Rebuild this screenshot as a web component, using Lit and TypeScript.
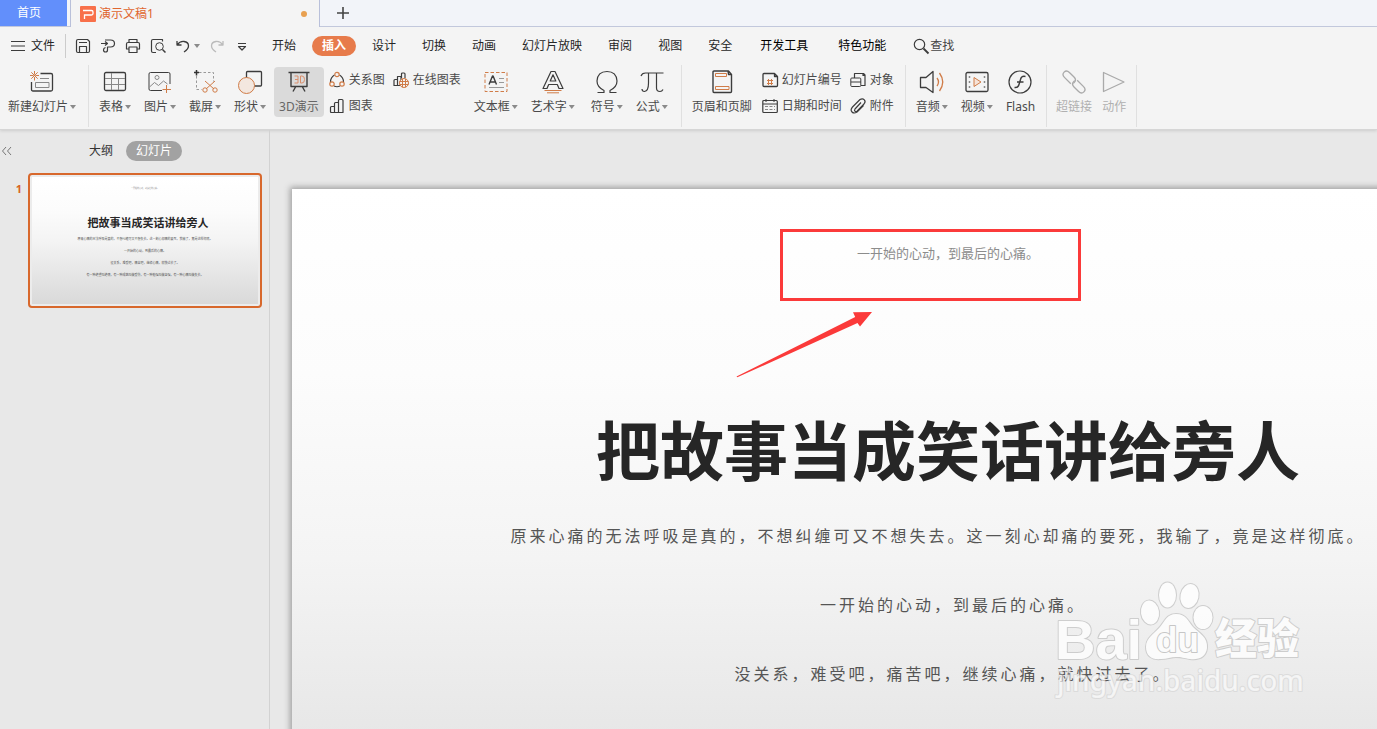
import { LitElement, html, svg, css } from "lit";
import { customElement, property } from "lit/decorators.js";
import { classMap } from "lit/directives/class-map.js";

const O = "#d07c48";

/* 24 × 24 glyphs for the large ribbon buttons */
const bigIcons: Record<string, unknown> = {
  newSlide: svg`<path stroke-width="1.300" d="M10.500 3.500H21q1.500 0 1.500 1.500v14.500q0 1.500-1.500 1.500H3q-1.500 0-1.500-1.500V12"/><path stroke="#888" d="M5.500 12.500h13.500v5H5.500zM10 8.500h9"/><path stroke="${O}" d="M4.500 1v3.500M4.500 7v3.500M0 5.500h3.500M5.500 5.500h3.500M1.300 2.300l6.400 6.400M7.700 2.300L1.300 8.700"/>`,
  table: svg`<rect x="1.500" y="2.500" width="21" height="18" rx="1.500" stroke-width="1.300"/><path stroke="#888" d="M2 8.500h20M2 14.500h20M8.500 3v17M15.500 8.500V20"/>`,
  picture: svg`<path d="M14 20.500H2.500q-1.500 0-1.500-1.500V4q0-1.500 1.500-1.500h18Q22 2.500 22 4v10"/><circle cx="9" cy="7.500" r="2" stroke="#888"/><path stroke="#888" d="M1.500 17l5-4.500 4 3 5-4.500 4 3"/><path stroke="${O}" d="M18.500 15v8M14.500 19.500h8.500"/>`,
  capture: svg`<path stroke="#999" stroke-dasharray="2.500 2" d="M6 2.500h14.500v9M3.500 6v13.500h5"/><path stroke="#333" stroke-width="1.500" d="M3.500 0v5.500M1 2.500h5"/><path stroke="${O}" d="M12 11l9 8M22 11l-9 8"/><circle stroke="${O}" cx="12" cy="20" r="2.200"/><circle stroke="${O}" cx="22" cy="20" r="2.200"/>`,
  shape: svg`<rect x="8.500" y="1.500" width="15" height="14.500" rx="1" stroke-width="1.300"/><circle cx="8.500" cy="15.500" r="8" fill="#f3e7df" stroke="${O}"/>`,
  demo: svg`<path stroke-width="1.400" d="M1.500 2.500h21M4 3v13.500h16V3M8.500 17l-2.500 4.500M15.500 17l2.500 4.500"/><path stroke="#d98f6c" d="M7.500 6h3.500v7H7.500M8 9.500h3M13.500 6h1.500q2.500 0 2.500 3.500t-2.500 3.500h-1.500z"/>`,
  textBox: svg`<rect x="1" y="2.500" width="22" height="19" stroke="${O}" stroke-dasharray="3.500 2"/><path stroke-width="1.400" d="M5 14.500L8.500 6h.6l3.400 8.500M6.300 12h5"/><path stroke="#999" d="M15 8.500h5M15 12.500h5M5 17.500h15"/>`,
  wordArt: svg`<path stroke-width="1.200" d="M2 18.500L10 1.500h4l8 17h-4l-1.700-4H7.700L6 18.500zM9.200 11h5.600L12 4.800z"/><path stroke="${O}" d="M3.500 20.500h17M6 22.800h12"/>`,
  symbol: svg`<path stroke-width="1.200" d="M2.500 22.500h6.500v-2Q2 17 2 11 2.500 1.500 12 1.500T22 11q0 6-7 9.500v2h6.500"/>`,
  formula: svg`<path stroke-width="1.200" d="M1 6q1-3 4.500-3H23.500M8.500 3v10q0 8-4 8.500-2.500 0-2.500-2.500M16.500 3v15q0 3.500 3.500 3.500 2 0 3-2"/>`,
  header: svg`<path stroke-width="1.400" d="M18.500 1H4Q3 1 3 2v19q0 1.500 1 1.500h16.500q1 0 1-1V4.500zM18 1l.5 3.500h3"/><path stroke="${O}" d="M5.500 3.500h11v3h-11zM5.500 16.500h13.500v3H5.500z"/>`,
  audio: svg`<path stroke-width="1.300" d="M13 1.500v21L6 17.500H.5V7.500H6z"/><path stroke="${O}" stroke-width="1.300" d="M17 8q3 4 0 8M19.500 3q6.500 9 0 18"/>`,
  video: svg`<rect x="1" y="2.500" width="22" height="19" rx="1.500" stroke-width="1.300"/><path stroke="#888" stroke-width="1.500" stroke-dasharray="2 3" d="M4.500 6v13M19.500 6v13"/><path stroke="${O}" fill="#f6e3d8" d="M9 7.500v9l7-4.500z"/>`,
  flash: svg`<circle cx="12" cy="12" r="11" stroke-width="1.200"/><path stroke-width="1.400" d="M17.500 6.500q-4-1-5 3l-1.500 5q-1 3.500-4.500 3M9 12h6.500"/>`,
  link: svg`<g stroke="#aaa" stroke-width="1.300" transform="rotate(45 12 12)"><path d="M11 15.500H2q-4 0-4-3.500T2 8.500h6.500q4 0 4 3.500v1.500"/><path d="M13 8.500H22q4 0 4 3.500t-4 3.500h-6.500q-4 0-4-3.500v-1.500"/></g>`,
  action: svg`<path stroke="#aaa" stroke-width="1.300" d="M1.500 2.500v19L22 12z"/>`,
};

/* 16 × 16 glyphs for small buttons and the quick bar */
const smallIcons: Record<string, unknown> = {
  relation: svg`<path stroke-width="1.200" d="M5.500 3Q1.500 5.500 1.500 10M10.500 3q4 2.500 4 7M5 14q3 1.500 6 0"/><g stroke="${O}" stroke-width="1.200"><circle cx="8" cy="2.500" r="2.200"/><circle cx="3" cy="12" r="2.200"/><circle cx="13" cy="12" r="2.200"/></g>`,
  chart: svg`<path stroke-width="1.200" d="M1.500 9.500q0-1 1-1h3v6h-3q-1 0-1-1zM5.500 14.500v-9q0-1 1-1h3v10zM9.500 14.500v-12q0-1 1-1H13q1 0 1 1v12z"/>`,
  onlineChart: svg`<path stroke-width="1.200" d="M1 13.500V8.500q0-1 1-1h2.500v6zM4.500 13.500v-9h3.500v9zM8.500 6V2q0-1 1-1H11q1 0 1 1v4"/><circle cx="11" cy="11" r="4.500" fill="#f4f4f4" stroke="${O}"/><path stroke="${O}" d="M6.500 9.500h9M6.500 12.500h9M9.500 6.800v8.500M12.500 6.800v8.500"/>`,
  slideNo: svg`<path stroke-width="1.300" d="M12.500 1.500H2q-1 0-1 1v11q0 1 1 1h12.500q1 0 1-1V4.500zM12.500 1.500v3h3"/><path stroke="${O}" d="M5 8.500h6M5 11.500h6M6.500 7v6M9.500 7v6"/>`,
  date: svg`<rect x=".8" y="2.500" width="14.500" height="12" rx="1" stroke-width="1.200"/><path d="M1 6h14M4 1v3M12 1v3"/><path stroke="#888" stroke-dasharray="3 1.500" d="M3 8.500h10M3 11.500h10"/>`,
  object: svg`<path stroke-width="1.200" d="M4.500 6V1.500h9L15 3v10.500h-4M13 1.500v2h2"/><rect x=".8" y="6" width="10" height="8.500" rx="1"/><path d="M1 10h10"/>`,
  attach: svg`<path stroke-width="1.200" d="M11 4.500L5 11q-1 1.500 0 2.200t2 0L14 6q2-2.500.3-4.200T10 1.500L2.500 9Q0 12 2 14t5 0l6.500-6.500"/>`,
  save: svg`<path stroke-width="1.200" d="M1.500 3q0-1.500 1.500-1.500h9.500l2 2V13q0 1.500-1.500 1.500H3q-1.500 0-1.500-1.500zM4 4.500h8M4.500 14V8.500h7V14"/>`,
  exportPdf: svg`<path stroke-width="1.200" d="M5 2h5.500q4 0 4 3.500T10.500 9H7.500v3q0 2-2 2t-2-2 2-2.500M1 5.500h6M5 3.500l2.500 2L5 7.500"/>`,
  print: svg`<path stroke-width="1.200" d="M4 4.500v-3h8v3M4 11H1.500V6q0-1.500 1.500-1.500h10q1.500 0 1.500 1.500v5H12M4 9h8v5.500H4z"/>`,
  preview: svg`<path stroke-width="1.200" d="M6 14.500H3q-1.500 0-1.500-1.500V3q0-1.500 1.500-1.500h9.500v2"/><circle cx="9.500" cy="8.500" r="3.800"/><path stroke-width="1.500" d="M12.500 11.500l3 3"/>`,
  undo: svg`<path stroke-width="1.300" d="M2 3v4h4.500M2 7q3-4 7-3.500 4.500.5 4.500 4.500 0 3-4.500 6"/>`,
  redo: svg`<path stroke="#bbb" stroke-width="1.300" d="M14 3v4H9.500M14 7Q11 3 7 3.500 2.500 4 2.500 8q0 3 4.500 6"/>`,
  more: svg`<path stroke-width="1.200" d="M4 5.500h8M4.500 8.500l3.500 3.500 3.500-3.500z"/>`,
  menu: svg`<path stroke-width="1.200" d="M1 3.500h14M1 8h14M1 12.500h14"/>`,
  search: svg`<circle cx="6.500" cy="6.500" r="5.200" stroke-width="1.200"/><path stroke-width="1.800" d="M10.500 10.500l5 5"/>`,
  plus: svg`<path stroke="#444" stroke-width="1.600" d="M8 2v12M2 8h12"/>`,
  collapse: svg`<path stroke="#777" d="M6 4L2.500 8 6 12M11 4L7.500 8l3.500 4"/>`,
};

const drawIcon = (set: Record<string, unknown>, name: string, size: number) => html`<svg
  class="icon" width=${size} height=${size} viewBox="0 0 ${size} ${size}" aria-hidden="true">${set[name]}</svg>`;
const big = (name: string) => drawIcon(bigIcons, name, 24);
const small = (name: string) => drawIcon(smallIcons, name, 16);
const caret = html`<i class="caret"></i>`;

const shared = css`
  :host, * { box-sizing: border-box; }
  button {
    font: inherit; color: inherit; border: 0; background: none; padding: 0; margin: 0;
    white-space: nowrap; cursor: pointer;
  }
  .icon {
    display: block; flex: none; overflow: visible; fill: none; stroke: #3c3c3c;
    stroke-width: 1; stroke-linejoin: round; stroke-linecap: butt;
  }
  .caret {
    flex: none; width: 6px; height: 4px; background: #8a8a8a;
    clip-path: polygon(0 0, 100% 0, 50% 100%);
  }
`;

@customElement("wps-title-bar")
class TitleBar extends LitElement {
  static styles = [shared, css`
    :host { display: flex; height: 27px; background: #f2f4f9; border-bottom: 1px solid #c2c8dc; }
    .home { width: 67px; padding-right: 9px; background: #628ffb; color: #fff; }
    .doc {
      display: flex; align-items: center; gap: 3px; width: 250px; height: 27px; margin-left: 3px;
      padding: 0 12px 0 9px; background: #f4f4f4; color: #e0662f;
      border-left: 1px solid #b9c0da; border-right: 1px solid #b9c0da;
    }
    .logo { width: 16px; height: 16px; border-radius: 1px; background: #f8704a; }
    .dot { width: 6px; height: 6px; margin-left: auto; border-radius: 50%; background: #e8a050; }
    .add { padding: 0 15px; }
  `];
  render() {
    return html`
      <button class="home">首页</button>
      <button class="doc">
        <svg class="logo" viewBox="0 0 16 16" fill="none" stroke="#fff" stroke-width="1.300" aria-hidden="true">
          <path d="M3 4.500h8.500q1.500 0 1.500 1.500v1.500q0 1.500-1.500 1.500H4.500V13" />
        </svg>
        演示文稿1<i class="dot"></i>
      </button>
      <button class="add" aria-label="新建">${small("plus")}</button>`;
  }
}

@customElement("wps-menu-bar")
class MenuBar extends LitElement {
  static styles = [shared, css`
    :host { display: flex; align-items: center; height: 38px; padding-left: 10px; color: #262626; }
    .file { display: flex; align-items: center; gap: 5px; padding-right: 10px; height: 24px; border-right: 1px solid #ccc; }
    .quick { display: flex; align-items: center; gap: 9px; padding: 0 12px 0 9px; }
    .undo { display: flex; align-items: center; gap: 3px; }
    .tabs { display: flex; gap: 6px; }
    .tab { height: 20px; line-height: 20px; padding: 0 10px; border-radius: 10px; }
    .tab.wide { padding: 0 12px; color: #000; }
    .tab.on { background: #e77b4b; color: #fff; font-weight: 700; }
    .find { display: flex; align-items: center; gap: 1px; margin-left: 15px; color: #444; }
  `];
  render() {
    const tabs = ["开始", "插入", "设计", "切换", "动画", "幻灯片放映", "审阅", "视图", "安全", "开发工具", "特色功能"];
    const quick = [["save", "保存"], ["exportPdf", "输出"], ["print", "打印"], ["preview", "打印预览"]];
    return html`
      <button class="file">${small("menu")}文件</button>
      <div class="quick">
        ${quick.map(([i, l]) => html`<button aria-label=${l}>${small(i)}</button>`)}
        <button class="undo" aria-label="撤销">${small("undo")}${caret}</button>
        <button aria-label="恢复">${small("redo")}</button>
        <button aria-label="更多">${small("more")}</button>
      </div>
      <nav class="tabs">
        ${tabs.map((t, i) => html`<button class=${classMap({ tab: true, on: i === 1, wide: i > 8 })}>${t}</button>`)}
      </nav>
      <button class="find">${small("search")}查找</button>`;
  }
}

@customElement("wps-ribbon")
class Ribbon extends LitElement {
  static styles = [shared, css`
    :host { display: flex; height: 65px; color: #4a4a4a; border-bottom: 1px solid #d6d6d6; }
    .group { display: flex; gap: 3px; height: 62px; padding: 2px 6px 0 5px; border-right: 1px solid #e0e0e0; }
    .group:first-child { padding: 2px 7px 0 3px; }
    .group.roomy { padding-right: 8px; }
    .group.tight { gap: 0; padding: 2px 5px 0 4px; }
    .cluster { display: flex; gap: 3px; }
    .cluster + .cluster { margin-left: 3px; }
    .big {
      display: flex; flex-direction: column; align-items: center; gap: 4px;
      height: 50px; padding: 3px 5px 1px; border-radius: 4px;
    }
    .big.on { background: #dadada; color: #666; }
    .big:disabled { color: #b0b0b0; }
    .label { display: flex; align-items: center; gap: 2px; line-height: 18px; }
    .stack { display: grid; grid-template-columns: auto auto; gap: 8px; align-content: start; padding: 4px 5px 0 2px; }
    .small { display: flex; align-items: center; gap: 4px; line-height: 18px; }
  `];
  private item(icon: string, label: string, menu = false, on = false, off = false) {
    return html`<button class=${classMap({ big: true, on })} ?disabled=${off}>
      ${big(icon)}<span class="label">${label}${menu ? caret : ""}</span>
    </button>`;
  }
  private stack(items: string[][]) {
    return html`<div class="stack">
      ${items.map(([i, l]) => html`<button class="small">${small(i)}${l}</button>`)}
    </div>`;
  }
  render() {
    return html`
      <div class="group">${this.item("newSlide", "新建幻灯片", true)}</div>
      <div class="group roomy">
        <div class="cluster">
          ${this.item("table", "表格", true)}${this.item("picture", "图片", true)}
          ${this.item("capture", "截屏", true)}${this.item("shape", "形状", true)}
          ${this.item("demo", "3D演示", false, true)}
          ${this.stack([["relation", "关系图"], ["onlineChart", "在线图表"], ["chart", "图表"]])}
          ${this.item("textBox", "文本框", true)}${this.item("wordArt", "艺术字", true)}
        </div>
        <div class="cluster">${this.item("symbol", "符号", true)}${this.item("formula", "公式", true)}</div>
      </div>
      <div class="group">
        ${this.item("header", "页眉和页脚")}
        ${this.stack([["slideNo", "幻灯片编号"], ["object", "对象"], ["date", "日期和时间"], ["attach", "附件"]])}
      </div>
      <div class="group">
        ${this.item("audio", "音频", true)}${this.item("video", "视频", true)}${this.item("flash", "Flash")}
      </div>
      <div class="group tight">
        ${this.item("link", "超链接", false, false, true)}${this.item("action", "动作", false, false, true)}
      </div>`;
  }
}

const HEADER = "一开始的心动，到最后的心痛。";
const TITLE = "把故事当成笑话讲给旁人";
const LINES = [
  "原来心痛的无法呼吸是真的，不想纠缠可又不想失去。这一刻心却痛的要死，我输了，竟是这样彻底。",
  "一开始的心动，到最后的心痛。",
  "没关系，难受吧，痛苦吧，继续心痛，就快过去了。",
  "有一种绝望叫绝情，有一种成熟叫做受伤，有一种勉强叫做坚强，有一种心痛叫做失去。",
];

@customElement("wps-slide")
class Slide extends LitElement {
  @property({ type: Boolean, reflect: true }) thumb = false;
  static styles = css`
    :host {
      display: block; aspect-ratio: 16 / 9; overflow: hidden; text-align: center; white-space: nowrap;
      background: linear-gradient(#fff 0%, #fcfcfc 25%, #f4f4f4 50%, #d9d9d9 100%);
    }
    .head, .title, .line { margin: 0; }
    .head { padding-top: 52px; font-size: 13px; line-height: 24px; color: #8c8c8c; }
    .title { padding-top: 138px; font-size: 64px; line-height: 96px; font-weight: 700; color: #262626; }
    .body { padding-top: 25px; }
    .line { font-size: 16px; line-height: 24px; margin-bottom: 45px; padding-left: 10px; letter-spacing: 3px; color: #555; }
    .line:first-child { padding: 0 20px 0 0; }
    :host([thumb]) .head { padding-top: 9px; font-size: 2px; line-height: 6px; }
    :host([thumb]) .title { padding-top: 23px; padding-left: 6px; font-size: 11px; line-height: 16px; }
    :host([thumb]) .body { padding-top: 5px; }
    :host([thumb]) .line { font-size: 3px; line-height: 6px; margin-bottom: 6px; letter-spacing: 0; padding: 0; }
  `;
  render() {
    return html`
      <p class="head">${HEADER}</p>
      <h1 class="title">${TITLE}</h1>
      <div class="body">${LINES.map((l) => html`<p class="line">${l}</p>`)}</div>`;
  }
}

@customElement("wps-outline")
class Outline extends LitElement {
  static styles = [shared, css`
    :host { display: block; flex: none; width: 270px; border-right: 1px solid #d2d2d2; color: #333; }
    .bar { display: flex; align-items: center; height: 41px; margin-bottom: 2px; }
    .modes { display: flex; gap: 3px; margin-left: 63px; }
    .mode { height: 20px; line-height: 20px; padding: 0 10px; border-radius: 10px; }
    .mode.on { background: #a2a2a2; color: #fff; }
    .row { display: flex; padding-right: 7px; }
    .num { width: 28px; padding: 6px 6px 0 0; text-align: right; font: 700 11px/20px "Noto Sans", sans-serif; color: #d8641f; }
    .frame { flex: 1; padding: 2px; border: 2px solid #d8682c; border-radius: 4px; background: #ececec; }
  `];
  render() {
    return html`
      <div class="bar">
        <button aria-label="收起">${small("collapse")}</button>
        <div class="modes">
          <button class="mode">大纲</button><button class="mode on">幻灯片</button>
        </div>
      </div>
      <div class="row"><span class="num">1</span><div class="frame"><wps-slide thumb></wps-slide></div></div>`;
  }
}

@customElement("wps-canvas")
class Canvas extends LitElement {
  static styles = [shared, css`
    :host { display: block; flex: 1; min-width: 0; overflow: hidden; position: relative; padding: 59px 0 0 22px; }
    .sheet { position: relative; width: 1312px; box-shadow: 0 0 6px 2px #a0a0a0; }
    .mark { position: absolute; left: 488px; top: 40px; width: 301px; height: 72px; border: 3px solid #fb3a3a; }
    .arrow { position: absolute; left: 444px; top: 122px; }
    .stamp { position: absolute; right: 67px; bottom: 29px; overflow: visible; opacity: .8; }
    .ink { fill: #fff; stroke: #c6c6c6; stroke-width: 2; stroke-linejoin: round; paint-order: stroke; }
    .latin { font: 700 56px "Liberation Sans", sans-serif; }
    .du { font: 700 35px "Liberation Sans", sans-serif; stroke: #bdbdbd; }
    .cjk { font: 900 42px "Noto Sans CJK SC", sans-serif; }
    .site { font: 500 28px "Noto Sans", sans-serif; fill-opacity: .8; stroke-opacity: .5; }
  `];
  render() {
    return html`
      <div class="sheet">
        <wps-slide></wps-slide>
        <div class="mark"></div>
        <svg class="arrow" width="138" height="68" viewBox="0 0 138 68" aria-hidden="true">
          <path fill="#fb3a3a" d="M136 1L117 1.300l2.200 4.700L.5 65.500l.8.800L121.500 12l2.500 3.500z" />
        </svg>
      </div>
      <svg class="stamp" width="260" height="125" viewBox="0 0 260 125" role="img" aria-label="Baidu 经验">
        <g class="ink">
          <text class="latin" x="5" y="84">Bai</text>
          <ellipse cx="100" cy="37.500" rx="9" ry="12" transform="rotate(-8 100 37.500)" />
          <ellipse cx="117.500" cy="20" rx="8.500" ry="12.500" />
          <ellipse cx="139.500" cy="21" rx="9" ry="12" transform="rotate(12 139.500 21)" />
          <ellipse cx="153" cy="42.500" rx="9.500" ry="11.500" />
          <path d="M126 39c10 0 12 7 17 13 6 6 15 10 14 21-1 9-8 12-17 11-6-1-9-2-14-2s-9 2-15 2c-9 1-15-3-15-12 0-9 8-13 14-20 5-6 7-13 16-13z" />
          <text class="cjk" x="165" y="79">经验</text>
          <text class="site" x="7" y="116">jingyan.baidu.com</text>
        </g>
        <text class="ink du" x="106" y="77">du</text>
      </svg>`;
  }
}

@customElement("app-root")
class AppRoot extends LitElement {
  static styles = css`
    :host {
      display: flex; flex-direction: column; height: 100vh; overflow: hidden; background: #e8e8e8;
      font: 12px/18px "Noto Sans", "Noto Sans CJK SC", sans-serif;
    }
    .top { flex: none; background: #f4f4f4; box-shadow: 0 1px 3px rgba(0, 0, 0, .12); }
    .work { display: flex; flex: 1; min-height: 0; }
  `;
  render() {
    return html`
      <header class="top">
        <wps-title-bar></wps-title-bar>
        <wps-menu-bar></wps-menu-bar>
        <wps-ribbon></wps-ribbon>
      </header>
      <main class="work"><wps-outline></wps-outline><wps-canvas></wps-canvas></main>`;
  }
}
